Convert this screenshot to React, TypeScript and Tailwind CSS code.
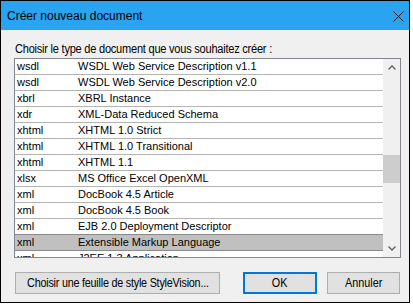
import React from "react";

const rows: [string, string][] = [
  ["wsdl", "WSDL Web Service Description v1.1"],
  ["wsdl", "WSDL Web Service Description v2.0"],
  ["xbrl", "XBRL Instance"],
  ["xdr", "XML-Data Reduced Schema"],
  ["xhtml", "XHTML 1.0 Strict"],
  ["xhtml", "XHTML 1.0 Transitional"],
  ["xhtml", "XHTML 1.1"],
  ["xlsx", "MS Office Excel OpenXML"],
  ["xml", "DocBook 4.5 Article"],
  ["xml", "DocBook 4.5 Book"],
  ["xml", "EJB 2.0 Deployment Descriptor"],
  ["xml", "Extensible Markup Language"],
  ["xml", "J2EE 1.3 Application"],
];

export default function App() {
  return (
    <div className="w-[413px] h-[307px] bg-white" style={{ fontFamily: '"Liberation Sans", Arial, sans-serif' }}>
      <div className="w-[410px] h-[303px] border border-black flex flex-col bg-[#f0f0f0]">
        <div className="h-[29px] bg-[#2aa3f0] flex items-center justify-between pl-[6px] pr-[5px] shrink-0">
          <span className="text-[12px] text-black leading-none">Créer nouveau document</span>
          <svg width="11" height="11" viewBox="0 0 11 11" className="mt-[1px]">
            <path d="M0.5 0.5 L10.5 10.5 M10.5 0.5 L0.5 10.5" stroke="#1a1a1a" strokeWidth="1" fill="none" />
          </svg>
        </div>
        <div className="flex flex-col pl-[13px] pr-[8px]">
          <div className="h-[28px] flex items-end pb-[3px] pl-[1px] text-[12px] leading-none text-black whitespace-nowrap">
            <span className="inline-block origin-left scale-x-[0.92] tracking-[-0.25px]">
              Choisir le type de document que vous souhaitez créer :
            </span>
          </div>
          <div className="h-[200px] border border-[#828790] bg-white flex overflow-hidden">
            <div className="flex-1 flex flex-col overflow-hidden">
              {rows.map(([ext, name], i) => {
                const sel = i === 11;
                return (
                  <div
                    key={i}
                    className={
                      "h-[16px] shrink-0 flex items-center text-[11px] leading-none text-black border-b whitespace-nowrap " +
                      (sel ? "bg-[#c0c0c0] border-[#8a8a8a] border-t -mt-[1px] h-[17px]" : "border-[#b4b4b4]")
                    }
                  >
                    <span className="w-[63px] pl-[2px] shrink-0">{ext}</span>
                    <span>{name}</span>
                  </div>
                );
              })}
            </div>
            <div className="w-[17px] shrink-0 bg-[#f0f0f0] flex flex-col">
              <div className="h-[17px] flex items-center justify-center">
                <svg width="8" height="5" viewBox="0 0 8 5">
                  <path d="M0.5 4.5 L4 1 L7.5 4.5" stroke="#606060" strokeWidth="1.3" fill="none" />
                </svg>
              </div>
              <div className="h-[79px]" />
              <div className="h-[28px] bg-[#cdcdcd]" />
              <div className="flex-1" />
              <div className="h-[17px] flex items-center justify-center">
                <svg width="8" height="5" viewBox="0 0 8 5">
                  <path d="M0.5 0.5 L4 4 L7.5 0.5" stroke="#606060" strokeWidth="1.3" fill="none" />
                </svg>
              </div>
            </div>
          </div>
          <div className="flex mt-[14px] pl-[1px] items-center">
            <button className="w-[205px] h-[22px] bg-[#e1e1e1] border border-[#adadad] text-[12px] text-black leading-none whitespace-nowrap flex items-center justify-center">
              <span className="inline-block scale-x-[0.9] tracking-[-0.25px]">Choisir une feuille de style StyleVision...</span>
            </button>
            <button className="ml-[23px] w-[74px] h-[22px] bg-[#e1e1e1] border-2 border-[#0078d7] text-[12px] text-black leading-none flex items-center justify-center">
              <span className="inline-block scale-x-[0.9]">OK</span>
            </button>
            <button className="ml-[10px] w-[73px] h-[22px] bg-[#e1e1e1] border border-[#adadad] text-[12px] text-black leading-none flex items-center justify-center">
              <span className="inline-block scale-x-[0.9]">Annuler</span>
            </button>
          </div>
        </div>
      </div>
    </div>
  );
}
